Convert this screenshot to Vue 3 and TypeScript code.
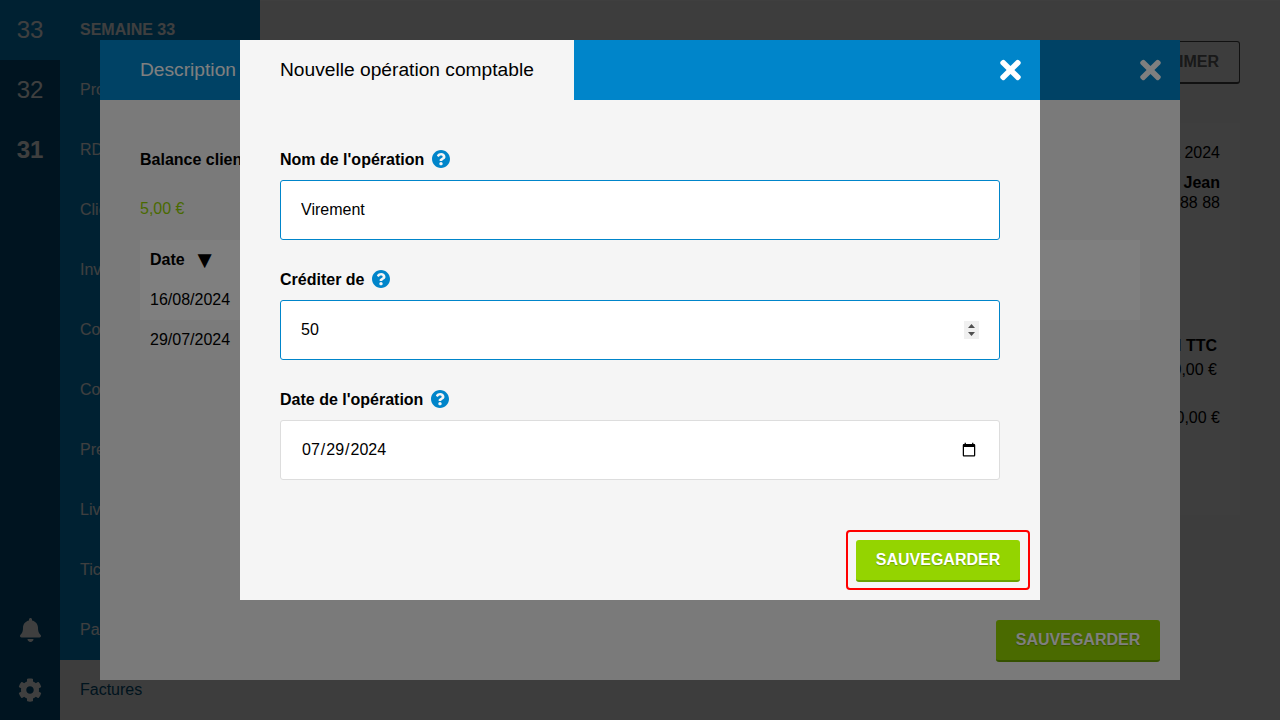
<script setup lang="ts">
const weeks = [
  { n: 32, strong: false },
  { n: 31, strong: true },
]
const menu = ['Prospection', 'RDV', 'Clients', 'Inventaire', 'Comptabilité', 'Commandes', 'Prestations', 'Livraisons', 'Tickets', 'Paiements']
const rows = ['16/08/2024', '29/07/2024']
const closeD = 'M242.72 256l100.07-100.07c12.28-12.28 12.28-32.19 0-44.48l-22.24-22.24c-12.28-12.28-32.19-12.28-44.48 0L176 189.28 75.93 89.21c-12.28-12.28-32.19-12.28-44.48 0L9.21 111.45c-12.28 12.28-12.28 32.19 0 44.48L109.28 256 9.21 356.07c-12.28 12.28-12.28 32.19 0 44.48l22.24 22.24c12.28 12.28 32.2 12.28 44.48 0L176 322.72l100.07 100.07c12.28 12.28 32.2 12.28 44.48 0l22.24-22.24c12.28-12.28 12.28-32.19 0-44.48L242.72 256z'
const helpD = 'M504 256c0 136.997-111.043 248-248 248S8 392.997 8 256C8 119.083 119.043 8 256 8s248 111.083 248 248zM262.655 90c-54.497 0-89.255 22.957-116.549 63.758-3.536 5.286-2.353 12.415 2.715 16.258l34.699 26.31c5.205 3.947 12.621 3.008 16.665-2.122 17.864-22.658 30.113-35.797 57.303-35.797 20.429 0 45.698 13.148 45.698 32.958 0 14.976-12.363 22.667-32.534 33.976C247.128 238.528 216 254.941 216 296v4c0 6.627 5.373 12 12 12h56c6.627 0 12-5.373 12-12v-1.333c0-28.462 83.186-29.647 83.186-106.667 0-58.002-60.165-102-116.531-102zM256 338c-25.365 0-46 20.635-46 46 0 25.364 20.635 46 46 46s46-20.636 46-46c0-25.365-20.635-46-46-46z'
</script>

<template>
  <div class="page">
    <aside class="rail">
      <div class="week current">33</div>
      <div v-for="w in weeks" :key="w.n" class="week" :class="{ strong: w.strong }">{{ w.n }}</div>
      <div class="rail-bottom">
        <div class="rail-icon">
          <svg width="21" height="24" viewBox="0 0 448 512"><path fill="#fff" d="M224 512c35.32 0 63.97-28.65 63.97-64H160.03c0 35.35 28.65 64 63.97 64zm215.39-149.71c-19.32-20.76-55.47-51.99-55.47-154.29 0-77.7-54.48-139.9-127.94-155.16V32c0-17.67-14.32-32-31.98-32s-31.98 14.33-31.98 32v20.84C118.56 68.1 64.08 130.3 64.08 208c0 102.3-36.15 133.53-55.47 154.29-6 6.45-8.66 14.16-8.61 21.71.11 16.4 12.98 32 32.1 32h383.8c19.12 0 32-15.6 32.1-32 .05-7.55-2.61-15.27-8.61-21.71z"/></svg>
        </div>
        <div class="rail-icon">
          <svg width="24" height="24" viewBox="0 0 512 512"><path fill="#fff" d="M487.4 315.7l-42.6-24.6c4.3-23.2 4.3-47 0-70.2l42.6-24.6c4.9-2.8 7.1-8.6 5.5-14-11.1-35.6-30-67.8-54.7-94.6-3.8-4.1-10-5.1-14.8-2.3L380.8 110c-17.9-15.4-38.5-27.3-60.8-35.1V25.8c0-5.6-3.9-10.5-9.4-11.7-36.7-8.2-74.3-7.8-109.2 0-5.5 1.2-9.4 6.1-9.4 11.7V75c-22.2 7.9-42.8 19.8-60.8 35.1L88.7 85.5c-4.9-2.8-11-1.9-14.8 2.3-24.7 26.7-43.6 58.9-54.7 94.6-1.7 5.4.6 11.2 5.5 14L67.3 221c-4.3 23.2-4.3 47 0 70.2l-42.6 24.6c-4.9 2.8-7.1 8.6-5.5 14 11.1 35.6 30 67.8 54.7 94.6 3.8 4.1 10 5.1 14.8 2.3l42.6-24.6c17.9 15.4 38.5 27.3 60.8 35.1v49.2c0 5.6 3.9 10.5 9.4 11.7 36.7 8.2 74.3 7.8 109.2 0 5.5-1.2 9.4-6.1 9.4-11.7v-49.2c22.2-7.9 42.8-19.8 60.8-35.1l42.6 24.6c4.9 2.8 11 1.9 14.8-2.3 24.7-26.7 43.6-58.9 54.7-94.6 1.5-5.5-.7-11.3-5.6-14.1zM256 336c-44.1 0-80-35.9-80-80s35.9-80 80-80 80 35.9 80 80-35.9 80-80 80z"/></svg>
        </div>
      </div>
    </aside>
    <nav class="menu">
      <div class="menu-title">SEMAINE 33</div>
      <div v-for="m in menu" :key="m" class="menu-item">{{ m }}</div>
      <div class="menu-item active">Factures</div>
    </nav>
    <main class="content">
      <div class="toolbar"><button class="print">IMPRIMER</button></div>
      <section class="invoice">
        <div class="line">Le 16 août 2024</div>
        <div class="line client"><strong>Dupont Jean</strong></div>
        <div class="line">06 88 88 88 88</div>
        <div class="totals">
          <div class="line inset"><strong>Total TTC</strong></div>
          <div class="line inset amount">50,00 €</div>
          <div class="line second">150,00 €</div>
        </div>
      </section>
    </main>

    <div class="overlay">
      <div class="modal back">
        <header class="head">
          <span class="back-tab">Description</span>
          <svg class="close" width="21" height="30" viewBox="0 0 352 512"><path fill="#fff" :d="closeD"/></svg>
        </header>
        <div class="back-body">
          <div class="balance-title">Balance client</div>
          <div class="balance">5,00 €</div>
          <div class="table">
            <div class="tr th"><span>Date</span><span class="sort">▼</span></div>
            <div v-for="(r, i) in rows" :key="r" class="tr" :class="i === 0 ? 'odd' : 'even'">{{ r }}</div>
          </div>
        </div>
        <div class="back-foot"><button class="save">SAUVEGARDER</button></div>
      </div>
    </div>

    <div class="overlay">
      <div class="modal front">
        <header class="head">
          <span class="tab">Nouvelle opération comptable</span>
          <svg class="close" width="21" height="30" viewBox="0 0 352 512"><path fill="#fff" :d="closeD"/></svg>
        </header>
        <form class="form" @submit.prevent>
          <div class="field">
            <label class="label" for="op-name">Nom de l'opération
              <svg class="help" width="18" height="18" viewBox="8 8 496 496"><path fill="#0085ca" :d="helpD"/></svg>
            </label>
            <input id="op-name" class="input focus" type="text" value="Virement" />
          </div>
          <div class="field">
            <label class="label" for="op-credit">Créditer de
              <svg class="help" width="18" height="18" viewBox="8 8 496 496"><path fill="#0085ca" :d="helpD"/></svg>
            </label>
            <input id="op-credit" class="input focus" type="number" value="50" />
          </div>
          <div class="field">
            <label class="label" for="op-date">Date de l'opération
              <svg class="help" width="18" height="18" viewBox="8 8 496 496"><path fill="#0085ca" :d="helpD"/></svg>
            </label>
            <input id="op-date" class="input" type="date" value="2024-07-29" />
          </div>
        </form>
        <div class="front-foot">
          <div class="highlight"><button class="save">SAUVEGARDER</button></div>
        </div>
      </div>
    </div>
  </div>
</template>

<style>
html, body { margin: 0; height: 100%; overflow: hidden; }
</style>

<style scoped>
* { box-sizing: border-box; }
.page {
  position: relative;
  display: flex;
  width: 1280px;
  height: 720px;
  overflow: hidden;
  background: #f5f5f5;
  color: #000;
  font-family: "Liberation Sans", Arial, sans-serif;
  font-size: 16px;
}
.rail {
  display: flex;
  flex-direction: column;
  width: 60px;
  background: #005280;
  color: #fff;
}
.week {
  display: flex;
  align-items: center;
  justify-content: center;
  height: 60px;
  font-size: 24px;
}
.week.current { background: #0085ca; }
.week.strong { font-weight: 700; }
.rail-bottom { margin-top: auto; }
.rail-icon {
  display: flex;
  align-items: center;
  justify-content: center;
  height: 60px;
}
.menu {
  display: flex;
  flex-direction: column;
  width: 200px;
  background: #0085ca;
  color: #fff;
}
.menu-title, .menu-item {
  display: flex;
  align-items: center;
  flex: none;
  height: 60px;
  padding-left: 20px;
}
.menu-title { font-weight: 700; }
.menu-item.active { background: #f5f5f5; color: #00517a; }
.content {
  flex: 1;
  padding: 40px 40px 0 0;
  border-top: 1px solid #fff;
}
.toolbar { display: flex; justify-content: flex-end; }
.print {
  height: 43px;
  padding: 0 20px;
  border: 1px solid #444;
  border-bottom-width: 2px;
  border-radius: 3px;
  background: transparent;
  font: 700 16px "Liberation Sans", Arial, sans-serif;
  color: #666;
}
.invoice {
  height: 392px;
  margin-top: 39px;
  padding: 20px 20px 0 0;
  background: #f8f8f8;
  text-align: right;
}
.line { height: 20px; line-height: 20px; }
.client { margin-top: 10px; }
.totals { margin-top: 123px; }
.inset { padding-right: 3px; }
.amount { margin-top: 4px; }
.second { margin-top: 28px; }

.overlay {
  position: absolute;
  inset: 0;
  background: rgba(0, 0, 0, 0.5);
}
.modal {
  position: absolute;
  top: 40px;
  display: flex;
  flex-direction: column;
  background: #f5f5f5;
}
.back { left: 100px; width: 1080px; height: 640px; }
.front { left: 240px; width: 800px; height: 560px; }
.head {
  display: flex;
  align-items: center;
  justify-content: space-between;
  flex: none;
  height: 60px;
  padding-right: 19px;
  background: #0085ca;
}
.back-tab { padding-left: 40px; font-size: 19.2px; color: #fff; }
.tab {
  display: flex;
  align-items: center;
  height: 60px;
  padding: 0 40px;
  background: #f5f5f5;
  font-size: 19.2px;
}
.back-body { flex: 1; padding: 50px 40px 0; }
.balance-title { height: 20px; line-height: 20px; font-weight: 700; }
.balance { margin-top: 29px; height: 20px; line-height: 20px; color: #94d400; }
.table { margin-top: 21px; }
.tr { display: flex; align-items: center; height: 40px; padding-left: 10px; }
.th { font-weight: 700; background: #fff; }
.sort { margin-left: 8px; font-size: 24px; line-height: 1; font-weight: 400; }
.odd { background: #fff; }
.even { background: #f6f6f6; }
.back-foot { display: flex; justify-content: flex-end; padding: 0 20px 18px; }
.form {
  display: flex;
  flex-direction: column;
  gap: 30px;
  flex: 1;
  padding: 50px 40px 0;
}
.field { display: flex; flex-direction: column; gap: 10px; }
.label {
  display: flex;
  align-items: center;
  gap: 8px;
  height: 20px;
  font-weight: 700;
}
.help { flex: none; margin-top: -1px; margin-bottom: 1px; }
.input {
  width: 100%;
  height: 60px;
  padding: 0 20px;
  border: 1px solid #ddd;
  border-radius: 3px;
  outline: none;
  background: #fff;
  color: #000;
  font: 16px "Liberation Sans", Arial, sans-serif;
}
.input.focus { border-color: #0085ca; }
.input[type="number"]::-webkit-inner-spin-button {
  -webkit-appearance: none;
  appearance: none;
  opacity: 1;
  width: 15px;
  height: 18px;
  margin: auto 0;
  background: #f0f0f0 url("data:image/svg+xml,%3Csvg xmlns='http://www.w3.org/2000/svg' width='15' height='18'%3E%3Cpath fill='%23505050' d='M7.5 3L11 7H4zM4 11h7l-3.5 4z'/%3E%3C/svg%3E") no-repeat center;
}
.front-foot { display: flex; justify-content: flex-end; padding: 0 10px 10px; }
.highlight {
  padding: 8px 8px 6px;
  border: 2px solid #f00;
  border-radius: 4px;
}
.save {
  display: block;
  width: 164px;
  height: 42px;
  padding: 0;
  border: 0;
  border-bottom: 2px solid #6aa300;
  border-radius: 3px;
  background: #94d400;
  color: #fff;
  font: 700 16px "Liberation Sans", Arial, sans-serif;
  text-shadow: 0 1px 1px rgba(0, 0, 0, 0.25);
}
</style>
